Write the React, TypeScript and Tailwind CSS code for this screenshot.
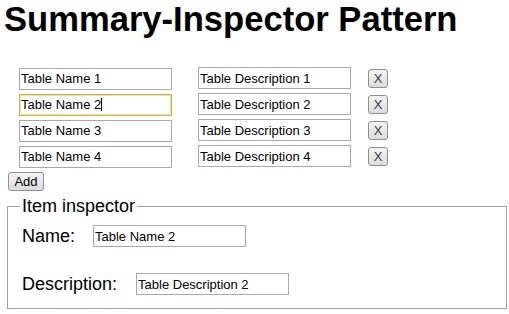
import { useState } from "react";

type Row = { name: string; description: string };

const initialRows: Row[] = [
  { name: "Table Name 1", description: "Table Description 1" },
  { name: "Table Name 2", description: "Table Description 2" },
  { name: "Table Name 3", description: "Table Description 3" },
  { name: "Table Name 4", description: "Table Description 4" },
];

const inputClass =
  "h-[22px] w-[153px] border bg-white px-[1px] text-[13px] text-black outline-none";

export default function App() {
  const [rows, setRows] = useState<Row[]>(initialRows);
  const [selected, setSelected] = useState(1);

  const update = (index: number, field: keyof Row, value: string) =>
    setRows((r) => r.map((row, i) => (i === index ? { ...row, [field]: value } : row)));

  const current = rows[selected];

  return (
    <div className="h-[314px] w-[509px] overflow-hidden bg-white font-['Liberation_Sans',Arial,sans-serif] text-black">
      <h1 className="m-0 pl-[4px] text-[34.6px] font-bold leading-[38px]">
        Summary-Inspector Pattern
      </h1>

      <div className="mt-[29px] flex flex-col gap-[4px] pl-[19px]">
        {rows.map((row, i) => (
          <div key={i} className="flex h-[22px] items-center">
            <div className="relative">
              <input
                className={`${inputClass} ${
                  i === selected ? "border-[#d6ad45] shadow-[inset_0_0_0_1px_#f3dfa4]" : "border-[#a9a9a9]"
                }`}
                value={row.name}
                onFocus={() => setSelected(i)}
                onChange={(e) => update(i, "name", e.target.value)}
              />
              {i === selected && (
                <span className="absolute left-[82px] top-[6px] h-[13px] w-[1px] bg-black" />
              )}
            </div>
            <input
              className={`${inputClass} ml-[26px] border-[#a9a9a9]`}
              value={row.description}
              onFocus={() => setSelected(i)}
              onChange={(e) => update(i, "description", e.target.value)}
            />
            <button
              className="ml-[17px] flex h-[19px] w-[20px] items-center justify-center rounded-[3px] border border-[#8e8f8f] bg-gradient-to-b from-[#f4f4f4] to-[#dcdcdc] text-[13px] leading-none text-[#3a3a4a]"
              onClick={() => {
                setRows((r) => r.filter((_, j) => j !== i));
                setSelected(0);
              }}
            >
              X
            </button>
          </div>
        ))}
      </div>

      <button
        className="ml-[8px] mt-[5px] flex h-[19px] w-[36px] items-center justify-center rounded-[3px] border border-[#8e8f8f] bg-gradient-to-b from-[#f4f4f4] to-[#dcdcdc] text-[13px] leading-none text-black"
        onClick={() => setRows((r) => [...r, { name: "", description: "" }])}
      >
        Add
      </button>

      <fieldset className="ml-[7px] mt-[5px] w-[500px] border border-[#a0a0a0] pb-[13px]">
        <legend className="ml-[12px] px-[2px] text-[18px] leading-[21px]">Item inspector</legend>
        <div className="mt-[8px] flex h-[22px] items-center pl-[14px]">
          <span className="text-[18px]">Name:</span>
          <input
            className={`${inputClass} ml-[18px] border-[#a9a9a9]`}
            value={current?.name ?? ""}
            onChange={(e) => update(selected, "name", e.target.value)}
          />
        </div>
        <div className="mt-[26px] flex h-[22px] items-center pl-[14px]">
          <span className="text-[18px]">Description:</span>
          <input
            className={`${inputClass} ml-[19px] border-[#a9a9a9]`}
            value={current?.description ?? ""}
            onChange={(e) => update(selected, "description", e.target.value)}
          />
        </div>
      </fieldset>
    </div>
  );
}
